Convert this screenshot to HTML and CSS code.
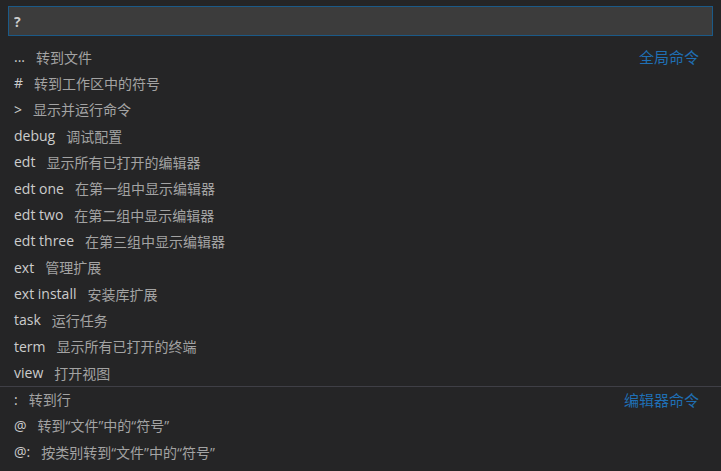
FILE: index.html
```html
<!DOCTYPE html>
<html lang="zh-CN">
<head>
    <meta charset="UTF-8">
    <title>Quick Open</title>
    <link rel="stylesheet" href="styles.css">
</head>
<body>
    <div class="quick-open">
        <div class="input-box">
            <input type="text" class="query" value="?" readonly>
        </div>
        <div class="list">
            <div class="row"><span class="label">...</span><span class="desc">转到文件</span><span class="group">全局命令</span></div>
            <div class="row"><span class="label">#</span><span class="desc">转到工作区中的符号</span></div>
            <div class="row"><span class="label">&gt;</span><span class="desc">显示并运行命令</span></div>
            <div class="row"><span class="label">debug</span><span class="desc">调试配置</span></div>
            <div class="row"><span class="label">edt</span><span class="desc">显示所有已打开的编辑器</span></div>
            <div class="row"><span class="label">edt one</span><span class="desc">在第一组中显示编辑器</span></div>
            <div class="row"><span class="label">edt two</span><span class="desc">在第二组中显示编辑器</span></div>
            <div class="row"><span class="label">edt three</span><span class="desc">在第三组中显示编辑器</span></div>
            <div class="row"><span class="label">ext</span><span class="desc">管理扩展</span></div>
            <div class="row"><span class="label">ext install</span><span class="desc">安装库扩展</span></div>
            <div class="row"><span class="label">task</span><span class="desc">运行任务</span></div>
            <div class="row"><span class="label">term</span><span class="desc">显示所有已打开的终端</span></div>
            <div class="row"><span class="label">view</span><span class="desc">打开视图</span></div>
            <div class="row separator"><span class="label">:</span><span class="desc">转到行</span><span class="group">编辑器命令</span></div>
            <div class="row"><span class="label">@</span><span class="desc">转到“文件”中的“符号”</span></div>
            <div class="row"><span class="label">@:</span><span class="desc">按类别转到“文件”中的“符号”</span></div>
        </div>
    </div>
</body>
</html>
```

FILE: styles.css
```css
html, body {
    margin: 0;
    padding: 0;
    background-color: #252526;
}

body {
    font-family: "Open Sans", "Noto Sans CJK SC", sans-serif;
    font-size: 14px;
    color: #cccccc;
}

.quick-open {
    width: 721px;
    height: 471px;
    overflow: hidden;
}

.input-box {
    padding: 6px 8px 8px 8px;
}

.query {
    display: block;
    box-sizing: border-box;
    width: 705px;
    height: 30px;
    margin: 0;
    padding: 0 5px;
    background: #3c3c3c;
    border: 1px solid #1b5a88;
    color: #cccccc;
    font-family: inherit;
    font-size: 14px;
    font-weight: bold;
    outline: none;
}

.list {
    display: flex;
    flex-direction: column;
}

.row {
    display: flex;
    align-items: center;
    box-sizing: border-box;
    height: 26.33px;
    padding: 0 22px 1px 14px;
    white-space: nowrap;
}

.row.separator {
    border-top: 1px solid #3f3f46;
}

.label {
    color: #cccccc;
}

.desc {
    margin-left: 11px;
    color: #a3a3a3;
}

.group {
    margin-left: auto;
    font-size: 15px;
    color: #1f6fb4;
}
```
